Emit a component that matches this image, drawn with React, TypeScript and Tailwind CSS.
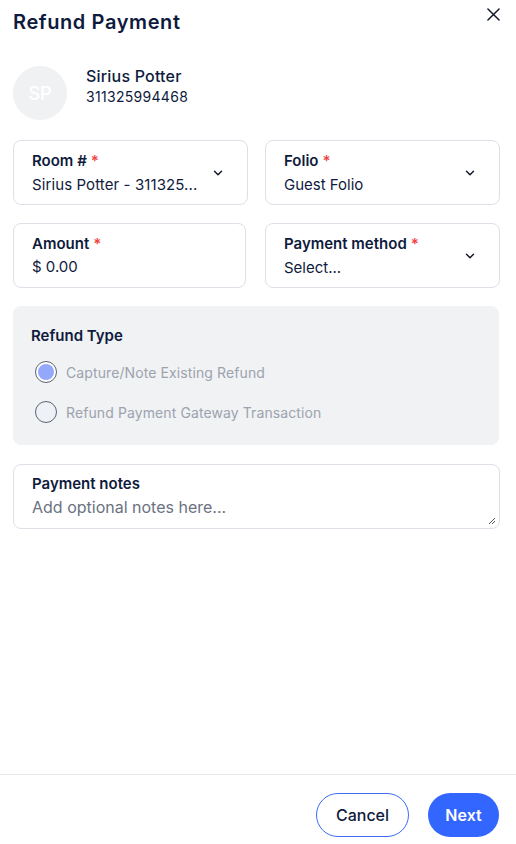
import React from "react";

const Chevron = () => (
  <svg width="14" height="14" viewBox="0 0 24 24" fill="none" stroke="#111827" strokeWidth="2.5" strokeLinecap="round" strokeLinejoin="round">
    <path d="M6 9l6 6 6-6" />
  </svg>
);

const Req = () => <span className="text-[#ef4444] ml-1">*</span>;

export default function App() {
  return (
    <div className="w-[516px] h-[844px] bg-white flex flex-col text-[#0f1b3d]" style={{ fontFamily: "Inter, 'Open Sans', sans-serif" }}>
      <div className="flex-1 flex flex-col pl-[13px] pr-[16px]">
        <div className="flex items-start justify-between h-[44px]">
          <h1 className="text-[20px] font-semibold leading-none mt-[12px] tracking-[0.6px]">Refund Payment</h1>
          <svg className="mt-[8px]" width="13" height="13" viewBox="0 0 14 14" stroke="#111827" strokeWidth="1.6" strokeLinecap="round">
            <path d="M1 1l12 12M13 1L1 13" />
          </svg>
        </div>
        <div className="flex items-center gap-[19px] mt-[22px]">
          <div className="w-[54px] h-[54px] rounded-full bg-[#f0f1f3] flex items-center justify-center text-white text-[18px] font-medium">SP</div>
          <div className="flex flex-col -mt-[14px]">
            <span className="text-[16px] font-medium leading-[22px] tracking-[0.2px]">Sirius Potter</span>
            <span className="text-[14px] leading-[20px] tracking-[0.3px]">311325994468</span>
          </div>
        </div>
        <div className="grid grid-cols-2 gap-x-[17px] gap-y-[18px] mt-[20px]">
          <div className="h-[65px] border border-[#dde0e6] rounded-[8px] flex items-center justify-between pl-[18px] pr-[22px]">
            <div className="flex flex-col min-w-0 pt-[2px]">
              <span className="text-[15px] font-semibold leading-[22px]">Room #<Req /></span>
              <span className="text-[15px] leading-[24px] whitespace-nowrap tracking-[0.1px] mt-[1px]">Sirius Potter - 311325...</span>
            </div>
            <Chevron />
          </div>
          <div className="h-[65px] border border-[#dde0e6] rounded-[8px] flex items-center justify-between pl-[18px] pr-[22px]">
            <div className="flex flex-col pt-[2px]">
              <span className="text-[15px] font-semibold leading-[22px]">Folio<Req /></span>
              <span className="text-[15px] leading-[24px] mt-[1px]">Guest Folio</span>
            </div>
            <Chevron />
          </div>
          <div className="h-[65px] w-[233px] border border-[#dde0e6] rounded-[8px] flex items-center pl-[18px]">
            <div className="flex flex-col">
              <span className="text-[15px] font-semibold leading-[22px]">Amount<Req /></span>
              <span className="text-[15px] leading-[24px]">$ 0.00</span>
            </div>
          </div>
          <div className="h-[65px] border border-[#dde0e6] rounded-[8px] flex items-center justify-between pl-[18px] pr-[22px]">
            <div className="flex flex-col pt-[2px]">
              <span className="text-[15px] font-semibold leading-[22px]">Payment method<Req /></span>
              <span className="text-[15px] leading-[24px] mt-[1px]">Select...</span>
            </div>
            <Chevron />
          </div>
        </div>
        <div className="mt-[18px] w-[486px] h-[139px] bg-[#f0f2f4] rounded-[8px] pl-[18px] pt-[19px]">
          <div className="text-[15px] font-semibold leading-[22px]">Refund Type</div>
          <div className="flex flex-col gap-[18px] mt-[14px] ml-[4px]">
            <div className="flex items-center gap-[9px]">
              <div className="w-[22px] h-[22px] rounded-full border border-[#5b6275] bg-white flex items-center justify-center">
                <div className="w-[16px] h-[16px] rounded-full bg-[#93a8fb]" />
              </div>
              <span className="text-[14px] text-[#9ca3af] tracking-[0.1px]">Capture/Note Existing Refund</span>
            </div>
            <div className="flex items-center gap-[9px]">
              <div className="w-[22px] h-[22px] rounded-full border border-[#5b6275] bg-[#eef1f5]" />
              <span className="text-[14px] text-[#9ca3af] tracking-[0.1px]">Refund Payment Gateway Transaction</span>
            </div>
          </div>
        </div>
        <div className="relative mt-[19px] h-[65px] border border-[#dde0e6] rounded-[8px] pl-[18px] pt-[8px]">
          <div className="text-[15px] font-semibold leading-[22px]">Payment notes</div>
          <div className="text-[16px] leading-[24px] text-[#6b7280]">Add optional notes here...</div>
          <svg className="absolute right-[3px] bottom-[3px]" width="8" height="8" viewBox="0 0 8 8" stroke="#555" strokeWidth="1">
            <path d="M7 1L1 7M7 4L4 7" />
          </svg>
        </div>
      </div>
      <div className="h-[70px] border-t border-[#e5e7eb] flex items-start justify-end gap-[19px] pr-[17px] pt-[18px] shrink-0">
        <button className="h-[44px] w-[93px] rounded-full border border-[#3b6cf6] text-[16px] font-medium">Cancel</button>
        <button className="h-[44px] w-[71px] rounded-full bg-[#3366ff] text-white text-[16px] font-semibold">Next</button>
      </div>
    </div>
  );
}
